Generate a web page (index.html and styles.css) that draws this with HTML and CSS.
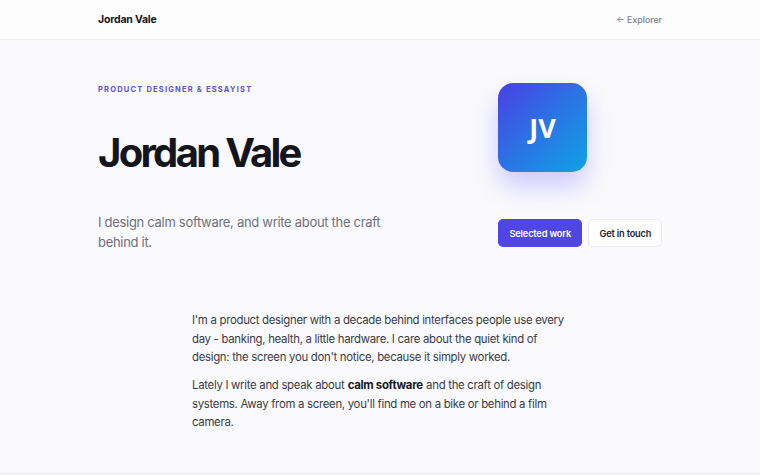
FILE: index.html
```html
<!DOCTYPE html>
<html lang="en">
<head>
<meta charset="utf-8">
<title>Jordan Vale</title>
<link rel="stylesheet" href="styles.css">
</head>
<body>
<header class="topbar">
  <div class="wrap topbar-inner">
    <a class="brand" href="#">Jordan Vale</a>
    <a class="back" href="#">← Explorer</a>
  </div>
</header>

<main>
  <section class="wrap hero">
    <div class="hero-title">
      <p class="eyebrow">Product designer &amp; essayist</p>
      <h1 class="name">Jordan Vale</h1>
    </div>
    <div class="avatar">JV</div>
    <p class="tagline">I design calm software, and write about the craft behind it.</p>
    <div class="actions">
      <a class="btn btn-primary" href="#">Selected work</a>
      <a class="btn btn-ghost" href="#">Get in touch</a>
    </div>
  </section>

  <section class="about">
    <p>I'm a product designer with a decade behind interfaces people use every day - banking, health, a little hardware. I care about the quiet kind of design: the screen you don't notice, because it simply worked.</p>
    <p>Lately I write and speak about <strong>calm software</strong> and the craft of design systems. Away from a screen, you'll find me on a bike or behind a film camera.</p>
  </section>
</main>
<footer class="foot"></footer>
</body>
</html>
```

FILE: styles.css
```css
* { box-sizing: border-box; }

html, body {
  margin: 0;
  padding: 0;
}

body {
  background: #fafafc;
  color: #111118;
  font-family: Inter, "Noto Sans", sans-serif;
  min-height: 475px;
  display: flex;
  flex-direction: column;
}

a { text-decoration: none; color: inherit; }

.wrap {
  width: 564px;
  margin: 0 auto;
}

/* top bar */
.topbar {
  height: 40px;
  border-bottom: 1px solid #ececf1;
  background: #fcfcfd;
}
.topbar-inner {
  height: 100%;
  display: flex;
  align-items: center;
  justify-content: space-between;
}
.brand {
  font-size: 10.5px;
  font-weight: 700;
  letter-spacing: -0.2px;
  color: #15151c;
}
.back {
  font-size: 8.8px;
  font-weight: 500;
  color: #80808c;
}

/* hero */
.hero {
  display: grid;
  grid-template-columns: 1fr 164px;
  column-gap: 20px;
  padding-top: 43px;
}
.hero-title { padding-top: 2px; }
.eyebrow {
  margin: 0;
  font-size: 7.5px;
  font-weight: 700;
  letter-spacing: 1.2px;
  text-transform: uppercase;
  color: #5b51d8;
  line-height: 10px;
}
.name {
  margin: 32px 0 0;
  font-size: 40px;
  font-weight: 700;
  letter-spacing: -2.7px;
  line-height: 52px;
  color: #14141c;
}
.avatar {
  width: 89px;
  height: 89px;
  border-radius: 15px;
  background: linear-gradient(135deg, #4840e2 0%, #2b74e4 50%, #0ea2e6 100%);
  color: #fff;
  font-family: "Open Sans", sans-serif;
  font-weight: 700;
  font-size: 27px;
  display: flex;
  align-items: center;
  justify-content: center;
  box-shadow: 0 14px 26px rgba(88, 76, 255, 0.28);
}
.tagline {
  margin: 34px 0 0;
  max-width: 300px;
  font-size: 13px;
  letter-spacing: -0.3px;
  line-height: 19.5px;
  color: #70707c;
}
.actions {
  display: flex;
  gap: 6px;
  margin-top: 40px;
  align-self: start;
}
.btn {
  height: 28px;
  display: inline-flex;
  align-items: center;
  border-radius: 5px;
  font-size: 9.2px;
  font-weight: 600;
  letter-spacing: -0.15px;
  white-space: nowrap;
}
.btn-primary {
  padding: 0 11.5px;
  background: #4f46e5;
  color: #fff;
}
.btn-ghost {
  padding: 0 10px;
  background: #fff;
  color: #22222a;
  border: 1px solid #e8e8ee;
}

/* about */
.about {
  width: 376px;
  margin: 59px auto 0;
  font-size: 11.4px;
  letter-spacing: -0.3px;
  line-height: 18.6px;
  color: #3a3a44;
}
.about p { margin: 0 0 9.5px; }
.about strong {
  color: #17171f;
  font-weight: 700;
  margin: 0 0.5px;
}

.foot {
  margin-top: auto;
  height: 2px;
  border-top: 1px solid #e6e8ec;
}
```
